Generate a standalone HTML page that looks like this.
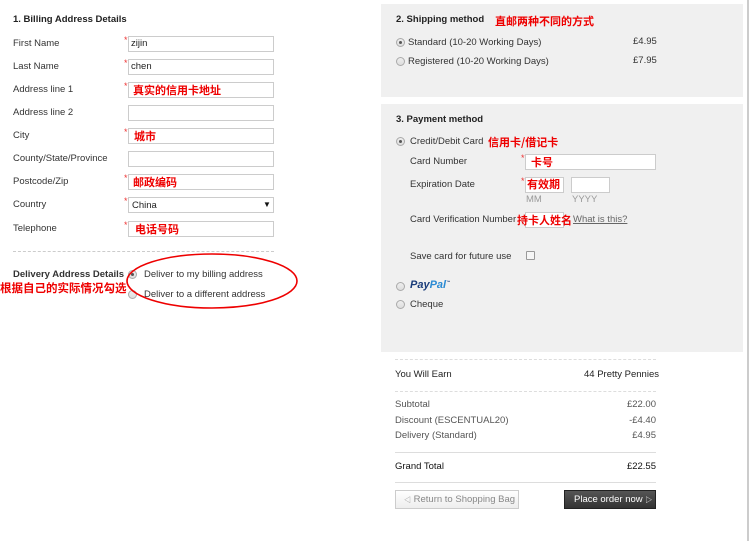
<!DOCTYPE html>
<html><head><meta charset="utf-8"><style>
*{margin:0;padding:0;box-sizing:border-box}
body{width:750px;height:541px;background:#fff;position:relative;overflow:hidden;font-family:"Liberation Sans","Noto Sans CJK SC",sans-serif;font-size:9.5px;color:#333}
.a{position:absolute;white-space:nowrap}
.b{font-weight:bold;color:#222}
.in{position:absolute;background:#fff;border:1px solid #ccc;height:16px}
.st{position:absolute;color:#e33;font-size:9px}
.r{color:#e00;font-weight:bold;font-size:11px;font-family:"Noto Sans CJK SC","WenQuanYi Zen Hei",sans-serif}
.rad{position:absolute;width:9px;height:9px;border-radius:50%;border:1px solid #aaa;background:linear-gradient(#eee,#ddd)}
.rad.on::after{content:"";position:absolute;left:2px;top:2px;width:3px;height:3px;border-radius:50%;background:#555}
.panel{position:absolute;background:#f0f0f0;left:381px;width:362px}
</style></head><body>
<div class="a b" style="left:13px;top:14px">1. Billing Address Details</div>

<div class="a" style="left:13px;top:38px">First Name</div>
<div class="st" style="left:124px;top:35px">*</div><div class="in" style="left:128px;top:36px;width:146px"><span class="a" style="left:2px;top:1px;color:#222">zijin</span></div>
<div class="a" style="left:13px;top:61px">Last Name</div>
<div class="st" style="left:124px;top:58px">*</div><div class="in" style="left:128px;top:59px;width:146px"><span class="a" style="left:2px;top:1px;color:#222">chen</span></div>
<div class="a" style="left:13px;top:84px">Address line 1</div>
<div class="st" style="left:124px;top:81px">*</div><div class="in" style="left:128px;top:82px;width:146px"><span class="a r" style="left:4px;top:-1px">真实的信用卡地址</span></div>
<div class="a" style="left:13px;top:107px">Address line 2</div>
<div class="in" style="left:128px;top:105px;width:146px"></div>
<div class="a" style="left:13px;top:130px">City</div>
<div class="st" style="left:124px;top:127px">*</div><div class="in" style="left:128px;top:128px;width:146px"><span class="a r" style="left:5px;top:-1px">城市</span></div>
<div class="a" style="left:13px;top:153px">County/State/Province</div>
<div class="in" style="left:128px;top:151px;width:146px"></div>
<div class="a" style="left:13px;top:176px">Postcode/Zip</div>
<div class="st" style="left:124px;top:173px">*</div><div class="in" style="left:128px;top:174px;width:146px"><span class="a r" style="left:4px;top:-1px">邮政编码</span></div>
<div class="a" style="left:13px;top:199px">Country</div>
<div class="st" style="left:124px;top:196px">*</div><div class="in" style="left:128px;top:197px;width:146px"><span class="a" style="left:3px;top:2px;color:#222">China</span><span class="a" style="left:134px;top:2px;font-size:8px;color:#111">▼</span></div>
<div class="a" style="left:13px;top:223px">Telephone</div>
<div class="st" style="left:124px;top:220px">*</div><div class="in" style="left:128px;top:221px;width:146px"><span class="a r" style="left:6px;top:-1px">电话号码</span></div>

<div class="a" style="left:13px;top:251px;width:261px;border-top:1px dashed #ccc"></div>
<div class="a b" style="left:13px;top:269px;color:#333">Delivery Address Details</div>
<div class="rad on" style="left:128px;top:270px"></div>
<div class="a" style="left:144px;top:269px">Deliver to my billing address</div>
<div class="rad" style="left:128px;top:290px"></div>
<div class="a" style="left:144px;top:289px">Deliver to a different address</div>
<div class="a r" style="left:0;top:280px;font-size:11.5px">根据自己的实际情况勾选</div>
<svg class="a" style="left:0;top:0" width="750" height="541"><ellipse cx="212" cy="281" rx="85" ry="27" fill="none" stroke="#e00" stroke-width="1.6"/></svg>

<div class="panel" style="top:4px;height:93px"></div>
<div class="a b" style="left:396px;top:14px">2. Shipping method</div>
<div class="a r" style="left:495px;top:13px">直邮两种不同的方式</div>
<div class="rad on" style="left:396px;top:38px"></div>
<div class="a" style="left:408px;top:37px">Standard (10-20 Working Days)</div>
<div class="a" style="left:633px;top:36px">£4.95</div>
<div class="rad" style="left:396px;top:57px"></div>
<div class="a" style="left:408px;top:56px">Registered (10-20 Working Days)</div>
<div class="a" style="left:633px;top:55px">£7.95</div>

<div class="panel" style="top:104px;height:248px"></div>
<div class="a b" style="left:396px;top:114px">3. Payment method</div>
<div class="rad on" style="left:396px;top:137px"></div>
<div class="a" style="left:410px;top:136px">Credit/Debit Card</div>
<div class="a r" style="left:488px;top:134px">信用卡/借记卡</div>
<div class="a" style="left:410px;top:156px">Card Number</div>
<div class="st" style="left:521px;top:153px">*</div><div class="in" style="left:525px;top:154px;width:131px"><span class="a r" style="left:5px;top:-1px">卡号</span></div>
<div class="a" style="left:410px;top:179px">Expiration Date</div>
<div class="st" style="left:521px;top:176px">*</div><div class="in" style="left:525px;top:177px;width:39px"></div>
<div class="a r" style="left:527px;top:176px">有效期</div>
<div class="in" style="left:571px;top:177px;width:39px"></div>
<div class="a" style="left:526px;top:194px;color:#999">MM</div>
<div class="a" style="left:572px;top:194px;color:#999">YYYY</div>
<div class="a" style="left:410px;top:214px">Card Verification Number</div>
<div class="in" style="left:525px;top:212px;width:39px"></div>
<div class="a r" style="left:517px;top:212px">持卡人姓名</div>
<div class="a" style="left:573px;top:214px;color:#666;text-decoration:underline">What is this?</div>
<div class="a" style="left:410px;top:251px">Save card for future use</div>
<div class="a" style="left:526px;top:251px;width:9px;height:9px;border:1px solid #999;background:#f6f6f6;border-radius:1px"></div>
<div class="rad" style="left:396px;top:282px"></div>
<div class="a" style="left:410px;top:279px;font-size:11px;font-weight:bold;font-style:italic;color:#1a3c7a">Pay<span style="color:#2a8ad3">Pal</span><sup style="font-size:4px">™</sup></div>
<div class="rad" style="left:396px;top:300px"></div>
<div class="a" style="left:410px;top:299px">Cheque</div>

<div class="a" style="left:395px;top:359px;width:261px;border-top:1px dashed #ddd"></div>
<div class="a" style="left:395px;top:369px;color:#222">You Will Earn</div>
<div class="a" style="left:584px;top:369px;color:#222">44 Pretty Pennies</div>
<div class="a" style="left:395px;top:391px;width:261px;border-top:1px dashed #ddd"></div>
<div class="a" style="left:395px;top:399px;color:#555">Subtotal</div><div class="a" style="right:94px;top:399px;color:#555">£22.00</div>
<div class="a" style="left:395px;top:415px;color:#555">Discount (ESCENTUAL20)</div><div class="a" style="right:94px;top:415px;color:#555">-£4.40</div>
<div class="a" style="left:395px;top:430px;color:#555">Delivery (Standard)</div><div class="a" style="right:94px;top:430px;color:#555">£4.95</div>
<div class="a" style="left:395px;top:452px;width:261px;border-top:1px solid #ddd"></div>
<div class="a" style="left:395px;top:461px;color:#111">Grand Total</div><div class="a" style="right:94px;top:461px;color:#111">£22.55</div>
<div class="a" style="left:395px;top:482px;width:261px;border-top:1px solid #ddd"></div>
<div class="a" style="left:395px;top:490px;width:124px;height:19px;border:1px solid #ccc;background:linear-gradient(#fff,#eee);color:#888;padding:3px 0 0 8px"><span style="font-size:7px">◁</span> Return to Shopping Bag</div>
<div class="a" style="left:564px;top:490px;width:92px;height:19px;background:linear-gradient(#555,#333);border:1px solid #222;color:#fff;padding:3px 0 0 9px">Place order now <span style="font-size:7px">▷</span></div>
<div class="a" style="left:747px;top:0;width:2px;height:541px;background:#ccc"></div>
</body></html>
